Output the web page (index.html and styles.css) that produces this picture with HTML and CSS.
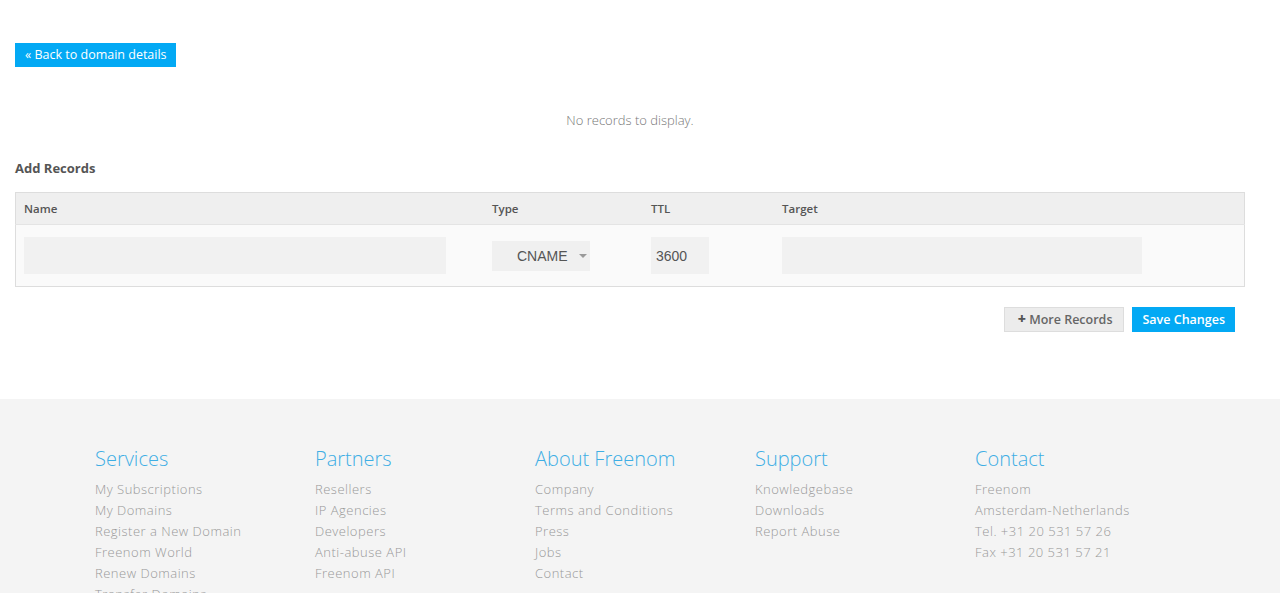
FILE: index.html
```html
<!DOCTYPE html>
<html lang="en">
<head>
    <meta charset="UTF-8">
    <title>Manage Freenom DNS</title>
    <link rel="stylesheet" href="styles.css">
</head>
<body>
    <div class="content">
        <a class="back-button" href="#">&laquo; Back to domain details</a>

        <p class="no-records">No records to display.</p>

        <h3 class="section-title">Add Records</h3>

        <table class="records-table">
            <thead>
                <tr>
                    <th class="col-name">Name</th>
                    <th class="col-type">Type</th>
                    <th class="col-ttl">TTL</th>
                    <th class="col-target">Target</th>
                </tr>
            </thead>
            <tbody>
                <tr>
                    <td><input type="text" class="field field-name"></td>
                    <td>
                        <div class="select-box">
                            <span>CNAME</span>
                            <span class="caret"></span>
                        </div>
                    </td>
                    <td><input type="text" class="field field-ttl" value="3600"></td>
                    <td><input type="text" class="field field-target"></td>
                </tr>
            </tbody>
        </table>

        <div class="actions">
            <button class="btn btn-grey"><span class="plus">+</span> More Records</button>
            <button class="btn btn-blue">Save Changes</button>
        </div>
    </div>

    <footer class="footer">
        <div class="footer-inner">
            <div class="footer-col">
                <h4>Services</h4>
                <a href="#">My Subscriptions</a>
                <a href="#">My Domains</a>
                <a href="#">Register a New Domain</a>
                <a href="#">Freenom World</a>
                <a href="#">Renew Domains</a>
                <a href="#">Transfer Domains</a>
            </div>
            <div class="footer-col">
                <h4>Partners</h4>
                <a href="#">Resellers</a>
                <a href="#">IP Agencies</a>
                <a href="#">Developers</a>
                <a href="#">Anti-abuse API</a>
                <a href="#">Freenom API</a>
            </div>
            <div class="footer-col">
                <h4>About Freenom</h4>
                <a href="#">Company</a>
                <a href="#">Terms and Conditions</a>
                <a href="#">Press</a>
                <a href="#">Jobs</a>
                <a href="#">Contact</a>
            </div>
            <div class="footer-col">
                <h4>Support</h4>
                <a href="#">Knowledgebase</a>
                <a href="#">Downloads</a>
                <a href="#">Report Abuse</a>
            </div>
            <div class="footer-col">
                <h4>Contact</h4>
                <span>Freenom</span>
                <span>Amsterdam-Netherlands</span>
                <span>Tel. +31 20 531 57 26</span>
                <span>Fax +31 20 531 57 21</span>
            </div>
        </div>
    </footer>
</body>
</html>
```

FILE: styles.css
```css
body {
    margin: 0;
    font-family: "Open Sans", sans-serif;
    font-size: 13px;
    color: #555;
    background: #fff;
}
.content {
    padding: 43px 35px 67px 15px;
}
.back-button {
    display: inline-block;
    background-color: #03a9f4;
    color: #fff;
    text-decoration: none;
    font-size: 12.5px;
    line-height: 24px;
    height: 24px;
    padding: 0 9px 0 10px;
}
.no-records {
    text-align: center;
    color: #777;
    font-weight: 300;
    margin: 43px 0 0 0;
    line-height: 20px;
}
.section-title {
    font-size: 13px;
    font-weight: 700;
    color: #555;
    margin: 29px 0 15px 0;
    line-height: 18px;
}
.records-table {
    width: 1230px;
    border-collapse: collapse;
    border: 1px solid #ddd;
    table-layout: fixed;
}
.records-table th {
    background-color: #efefef;
    text-align: left;
    font-size: 11.5px;
    font-weight: 600;
    color: #555;
    height: 31px;
    line-height: 16px;
    padding: 0 8px;
    border-bottom: 1px solid #e4e4e4;
}
.records-table td {
    background-color: #fafafa;
    padding: 12px 8px;
    height: 37px;
    vertical-align: middle;
}
.col-name { width: 452px; }
.col-type { width: 143px; }
.col-ttl { width: 115px; }
.field {
    display: block;
    box-sizing: border-box;
    height: 37px;
    border: none;
    background-color: #f1f1f1;
    font-family: "Liberation Sans", Arial, sans-serif;
    font-size: 14px;
    color: #555;
    padding: 0 5px;
    outline: none;
}
.field-name { width: 422px; }
.field-ttl { width: 58px; }
.field-target { width: 360px; }
.select-box {
    box-sizing: border-box;
    width: 98px;
    height: 30px;
    background-color: #f0f0f0;
    display: flex;
    align-items: center;
    padding-left: 25px;
    font-family: "Liberation Sans", Arial, sans-serif;
    font-size: 14px;
    color: #555;
}
.caret {
    margin-left: 11px;
    width: 0;
    height: 0;
    border-left: 4px solid transparent;
    border-right: 4px solid transparent;
    border-top: 4px solid #999;
}
.actions {
    display: flex;
    justify-content: flex-end;
    align-items: flex-start;
    gap: 8px;
    margin-top: 20px;
    padding-right: 10px;
}
.btn {
    box-sizing: border-box;
    font-family: "Open Sans", sans-serif;
    font-size: 12.5px;
    font-weight: 600;
    height: 25px;
    line-height: 23px;
    border: none;
    padding: 0 10px;
    cursor: pointer;
}
.btn-grey {
    background-color: #ececec;
    color: #666;
    border: 1px solid #ddd;
    padding: 0 11px 0 13px;
}
.plus {
    font-weight: 800;
    font-size: 14px;
    line-height: 14px;
    color: #555;
}
.btn-blue {
    background-color: #03a9f4;
    color: #fff;
}
.footer {
    background-color: #f4f4f4;
    padding: 46px 0 40px 95px;
}
.footer-inner {
    display: flex;
}
.footer-col {
    width: 220px;
    display: flex;
    flex-direction: column;
}
.footer-col h4 {
    margin: 0 0 6px 0;
    font-size: 20px;
    font-weight: 300;
    color: #3eaee4;
    line-height: 28px;
}
.footer-col a,
.footer-col span {
    color: #999;
    text-decoration: none;
    font-weight: 300;
    font-size: 13px;
    letter-spacing: 0.5px;
    line-height: 21px;
}
```
